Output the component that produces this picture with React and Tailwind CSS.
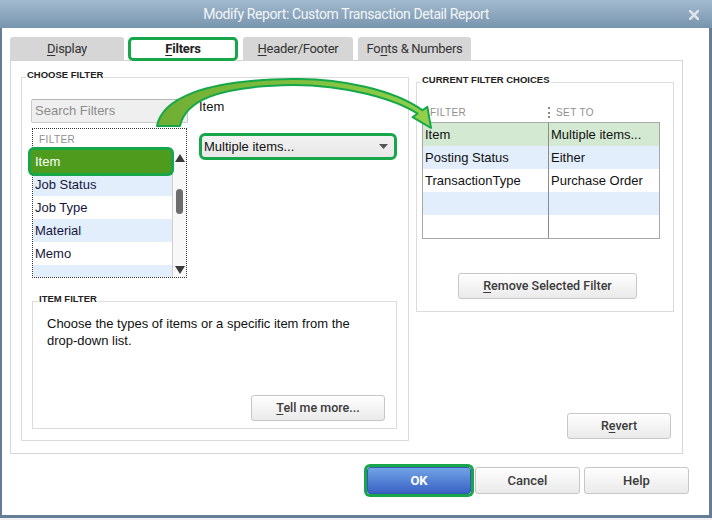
import React from "react";

const sans = "font-['Liberation_Sans',Arial,sans-serif]";
const rob = "font-['Roboto','Liberation_Sans',sans-serif]";

function U({ children }) {
  return <span className="underline decoration-1 underline-offset-[2px]">{children}</span>;
}

function Btn({ children, className = "" }) {
  return (
    <div
      className={
        "flex items-center justify-center rounded-[3px] border border-[#c7c7c7] bg-linear-to-b from-[#fefefe] to-[#eaeaea] text-[12.5px] font-medium text-[#3b3b3b] " +
        rob +
        " " +
        className
      }
    >
      {children}
    </div>
  );
}

function GroupLabel({ children, className = "" }) {
  return (
    <div
      className={
        "-mt-[9px] w-fit bg-white px-[1px] text-[9.5px] font-bold leading-[12px] text-[#222] " +
        sans +
        " " +
        className
      }
    >
      {children}
    </div>
  );
}

function Tab({ children, active, className = "" }) {
  if (active) {
    return (
      <div
        className={
          "relative z-10 -mb-[1px] flex h-[24px] items-center justify-center rounded-[5px] border-[3px] border-[#17a74a] bg-white text-[13px] font-bold tracking-[-0.2px] text-[#222] " +
          rob +
          " " +
          className
        }
      >
        {children}
      </div>
    );
  }
  return (
    <div
      className={
        "flex h-[23px] items-center justify-center rounded-t-[3px] bg-[#d6d6d6] text-[13px] tracking-[-0.3px] text-[#333] " +
        rob +
        " " +
        className
      }
    >
      {children}
    </div>
  );
}

function TriUp() {
  return (
    <svg width="10" height="8" viewBox="0 0 10 8">
      <polygon points="5,0 10,8 0,8" fill="#3a3a3a" />
    </svg>
  );
}

function TriDown() {
  return (
    <svg width="10" height="8" viewBox="0 0 10 8">
      <polygon points="0,0 10,0 5,8" fill="#3a3a3a" />
    </svg>
  );
}

const filters = [
  { name: "Item", selected: true },
  { name: "Job Status", blue: true },
  { name: "Job Type" },
  { name: "Material", blue: true },
  { name: "Memo" },
  { name: "", blue: true, last: true },
];

const choices = [
  { f: "Item", s: "Multiple items...", bg: "bg-[#d3e9d1]" },
  { f: "Posting Status", s: "Either", bg: "bg-[#e3eefc]" },
  { f: "TransactionType", s: "Purchase Order", bg: "bg-white" },
  { f: "", s: "", bg: "bg-[#e3eefc]" },
  { f: "", s: "", bg: "bg-white" },
];

export default function App() {
  return (
    <div className="relative h-[520px] w-[712px] overflow-hidden bg-[#eef0f2]">
      {/* title bar */}
      <div className="relative flex h-[28px] items-center justify-center bg-linear-to-b from-[#a3bace] to-[#7895ae] pr-[20px]">
        <span className={"text-[14px] tracking-[-0.4px] text-[#f3f6f9] " + rob}>
          Modify Report: Custom Transaction Detail Report
        </span>
        <svg className="absolute right-[13px] top-[10px]" width="10" height="10" viewBox="0 0 10 10">
          <path d="M1 1 L9 9 M9 1 L1 9" stroke="#dde4ea" strokeWidth="2.6" strokeLinecap="square" />
        </svg>
      </div>

      {/* window body */}
      <div className="flex h-[490px] flex-col border-b-[3px] border-l-2 border-r-[3px] border-[#657e95] bg-white">
        {/* tabs */}
        <div className="flex items-end pl-[8px] pt-[9px]">
          <Tab className="w-[114px]">
            <U>D</U>isplay
          </Tab>
          <Tab active className="ml-[4px] w-[110px]">
            <U>F</U>ilters
          </Tab>
          <Tab className="ml-[5px] w-[110px]">
            <U>H</U>eader/Footer
          </Tab>
          <Tab className="ml-[5px] w-[113px]">
            Fo<U>n</U>ts &amp; Numbers
          </Tab>
        </div>

        {/* tab panel */}
        <div className="ml-[8px] flex h-[394px] w-[673px] border border-[#d5d5d5] pl-[10px] pt-[16px]">
          {/* choose filter */}
          <div className="flex h-[364px] w-[388px] flex-col self-start border border-[#dcdcdc]">
            <GroupLabel className="ml-[4px]">CHOOSE FILTER</GroupLabel>
            <div className="ml-[9px] mt-[18px] flex">
              <div className="flex w-[157px] flex-col">
                <div
                  className={
                    "flex h-[24px] items-center rounded-[2px] border border-[#c9c9c9] border-t-[#b5b5b5] bg-[#efefef] pl-[3px] text-[13px] text-[#8c8c8c] " +
                    sans
                  }
                >
                  Search Filters
                </div>
                <div className="ml-[1px] mt-[5px] flex h-[150px] w-[155px] flex-col border border-dotted border-[#333]">
                  <div className={"flex h-[21px] shrink-0 items-center pl-[6px] text-[10px] tracking-[0.4px] text-[#8f8f8f] " + sans}>
                    FILTER
                  </div>
                  <div className="flex min-h-0 flex-1">
                    <div className="flex w-[140px] flex-col">
                      {filters.map((r, i) =>
                        r.selected ? (
                          <div
                            key={i}
                            className={
                              "relative z-10 -ml-[2px] flex h-[23px] w-[140px] shrink-0 items-center rounded-[3px] bg-[#4f9b1e] pl-[4px] text-[13px] text-white ring-3 ring-[#17a74a] " +
                              sans
                            }
                          >
                            {r.name}
                          </div>
                        ) : (
                          <div
                            key={i}
                            className={
                              "flex shrink-0 items-center pl-[2px] text-[13px] text-[#16163c] " +
                              (r.blue ? "bg-[#e3eefc] " : "bg-white ") +
                              (r.last ? "h-[12px] " : "h-[23px] ") +
                              sans
                            }
                          >
                            {r.name}
                          </div>
                        )
                      )}
                    </div>
                    <div className="flex w-[14px] flex-col items-center border-l border-[#cfcfcf] bg-[#f8f8f8]">
                      <div className="flex h-[14px] items-center justify-center pt-[2px]">
                        <TriUp />
                      </div>
                      <div className="mt-[25px] h-[25px] w-[7px] rounded-full bg-[#6e6e6e]" />
                      <div className="mt-auto flex h-[14px] items-center justify-center pb-[1px]">
                        <TriDown />
                      </div>
                    </div>
                  </div>
                </div>
              </div>

              <div className="ml-[11px] flex flex-col">
                <div className={"text-[13px] leading-[15px] text-[#111] " + sans}>Item</div>
                <div className="mt-[19px] flex h-[27px] w-[198px] items-center justify-between rounded-[6px] border-[3px] border-[#17a74a] bg-linear-to-b from-[#f2f2f2] to-[#e8e8e8] pl-[2px] pr-[6px]">
                  <span className={"text-[13px] text-[#111] " + sans}>Multiple items...</span>
                  <svg width="9" height="5" viewBox="0 0 9 5">
                    <polygon points="0,0 9,0 4.5,5" fill="#555" />
                  </svg>
                </div>
              </div>
            </div>

            {/* item filter */}
            <div className="ml-[10px] mt-[23px] flex h-[128px] w-[365px] flex-col border border-[#dcdcdc]">
              <GroupLabel className="ml-[5px]">ITEM FILTER</GroupLabel>
              <div className={"ml-[14px] mt-[10px] text-[13px] leading-[17px] text-[#111] " + sans}>
                Choose the types of items or a specific item from the
                <br />
                drop-down list.
              </div>
              <Btn className="mb-[7px] mr-[11px] mt-auto h-[26px] w-[134px] self-end">
                <span>
                  <U>T</U>ell me more...
                </span>
              </Btn>
            </div>
          </div>

          {/* current filter choices + revert */}
          <div className="ml-[7px] flex w-[258px] flex-col">
            <div className="mt-[5px] flex h-[230px] flex-col border border-[#dcdcdc]">
              <GroupLabel className="ml-[4px]">CURRENT FILTER CHOICES</GroupLabel>
              <div className={"mt-[18px] flex h-[16px] items-center text-[10px] tracking-[0.4px] text-[#8f8f8f] " + sans}>
                <span className="ml-[13px] w-[118px]">FILTER</span>
                <span className="h-[11px] border-l-2 border-dotted border-[#8a8a8a]" />
                <span className="ml-[6px]">SET TO</span>
              </div>
              <div className="ml-[5px] mt-[2px] flex w-[238px] flex-col border border-[#a8a8a8]">
                {choices.map((c, i) => (
                  <div key={i} className={"flex h-[23px] " + c.bg + " " + sans}>
                    <div className="flex w-[126px] items-center border-r border-[#8c8c8c] pl-[2px] text-[13px] text-[#111]">
                      {c.f}
                    </div>
                    <div className="flex flex-1 items-center pl-[2px] text-[13px] text-[#111]">{c.s}</div>
                  </div>
                ))}
              </div>
              <Btn className="ml-[41px] mt-[34px] h-[26px] w-[179px]">
                <span>
                  <U>R</U>emove Selected Filter
                </span>
              </Btn>
            </div>
            <Btn className="mb-[14px] mr-[3px] mt-auto h-[26px] w-[104px] self-end">
              <span>
                R<U>e</U>vert
              </span>
            </Btn>
          </div>
        </div>

        {/* dialog buttons */}
        <div className="mt-[13px] flex justify-end pr-[20px]">
          <div
            className={
              "flex h-[27px] w-[104px] items-center justify-center rounded-[3px] border border-[#3159b5] bg-linear-to-b from-[#73a3e6] to-[#3a62c5] text-[13px] font-bold text-white ring-3 ring-[#17a74a] " +
              rob
            }
          >
            OK
          </div>
          <Btn className="ml-[4px] h-[27px] w-[105px] text-[13px]">Cancel</Btn>
          <Btn className="ml-[4px] h-[27px] w-[105px] text-[13px]">Help</Btn>
        </div>
      </div>

      {/* callout arrow from the selected filter to the current choices */}
      <svg className="pointer-events-none absolute left-0 top-0" width="712" height="520" viewBox="0 0 712 520">
        <defs>
          <linearGradient id="arrowFill" x1="0" y1="0" x2="1" y2="0">
            <stop offset="0" stopColor="#6fae34" />
            <stop offset="0.5" stopColor="#7fbf3e" />
            <stop offset="1" stopColor="#93d04a" />
          </linearGradient>
        </defs>
        <path
          d="M157,126 C162,100 200,80 293,79 C340,78 395,90 422.5,110.3 L427.4,106.9 L431,128 L412.6,117.1 L417.5,113.7 C395,99 345,85 293,85 C215,86 185,102 180,126 Z"
          fill="url(#arrowFill)"
          stroke="#14a84a"
          strokeWidth="2"
          strokeLinejoin="round"
        />
      </svg>
    </div>
  );
}
